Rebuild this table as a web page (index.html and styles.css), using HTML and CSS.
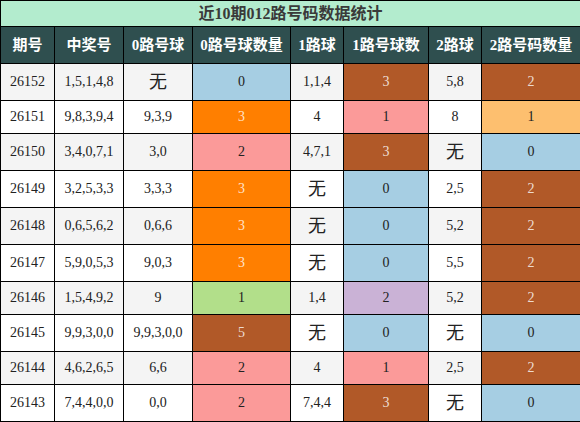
FILE: index.html
```html
<!DOCTYPE html>
<html lang="zh">
<head>
    <meta charset="UTF-8">
    <title>近10期012路号码数据统计</title>
    <link rel="stylesheet" href="styles.css">
</head>
<body>
    <table class="stats">
        <colgroup>
            <col style="width: 54px">
            <col style="width: 69px">
            <col style="width: 69px">
            <col style="width: 98px">
            <col style="width: 53px">
            <col style="width: 85px">
            <col style="width: 53px">
            <col style="width: 99px">
        </colgroup>
        <thead>
            <tr><th class="title" colspan="8">近10期012路号码数据统计</th></tr>
            <tr class="head">
                <th>期号</th>
                <th>中奖号</th>
                <th>0路号球</th>
                <th>0路号球数量</th>
                <th>1路球</th>
                <th>1路号球数</th>
                <th>2路球</th>
                <th>2路号码数量</th>
            </tr>
        </thead>
        <tbody>
            <tr class="tall">
                <td>26152</td><td>1,5,1,4,8</td><td><span class="none">无</span></td><td class="c0">0</td>
                <td>1,1,4</td><td class="c3">3</td><td>5,8</td><td class="c3">2</td>
            </tr>
            <tr>
                <td>26151</td><td>9,8,3,9,4</td><td>9,3,9</td><td class="c-or">3</td>
                <td>4</td><td class="c-pink">1</td><td>8</td><td class="c-lor">1</td>
            </tr>
            <tr class="tall">
                <td>26150</td><td>3,4,0,7,1</td><td>3,0</td><td class="c-pink">2</td>
                <td>4,7,1</td><td class="c3">3</td><td><span class="none">无</span></td><td class="c0">0</td>
            </tr>
            <tr class="tall">
                <td>26149</td><td>3,2,5,3,3</td><td>3,3,3</td><td class="c-or">3</td>
                <td><span class="none">无</span></td><td class="c0">0</td><td>2,5</td><td class="c3">2</td>
            </tr>
            <tr class="tall">
                <td>26148</td><td>0,6,5,6,2</td><td>0,6,6</td><td class="c-or">3</td>
                <td><span class="none">无</span></td><td class="c0">0</td><td>5,2</td><td class="c3">2</td>
            </tr>
            <tr class="tall">
                <td>26147</td><td>5,9,0,5,3</td><td>9,0,3</td><td class="c-or">3</td>
                <td><span class="none">无</span></td><td class="c0">0</td><td>5,5</td><td class="c3">2</td>
            </tr>
            <tr>
                <td>26146</td><td>1,5,4,9,2</td><td>9</td><td class="c-green">1</td>
                <td>1,4</td><td class="c-purple">2</td><td>5,2</td><td class="c3">2</td>
            </tr>
            <tr class="tall">
                <td>26145</td><td>9,9,3,0,0</td><td>9,9,3,0,0</td><td class="c3">5</td>
                <td><span class="none">无</span></td><td class="c0">0</td><td><span class="none">无</span></td><td class="c0">0</td>
            </tr>
            <tr>
                <td>26144</td><td>4,6,2,6,5</td><td>6,6</td><td class="c-pink">2</td>
                <td>4</td><td class="c-pink">1</td><td>2,5</td><td class="c3">2</td>
            </tr>
            <tr class="tall">
                <td>26143</td><td>7,4,4,0,0</td><td>0,0</td><td class="c-pink">2</td>
                <td>7,4,4</td><td class="c3">3</td><td><span class="none">无</span></td><td class="c0">0</td>
            </tr>
        </tbody>
    </table>
</body>
</html>
```

FILE: styles.css
```css
body {
    margin: 0;
    background: #ffffff;
    font-family: "Liberation Serif", "Noto Sans CJK SC", serif;
}

.stats {
    width: 580px;
    border-collapse: collapse;
    table-layout: fixed;
    border: 1px solid #000;
}

.stats th,
.stats td {
    border: 1px solid #000;
    text-align: center;
    padding: 0;
}

.title {
    background: #b3ecce;
    color: #3a3a3a;
    font-size: 16px;
    font-weight: bold;
    height: 25px;
    line-height: 25px;
}

.head th {
    background: #2f4f4f;
    color: #ffffff;
    font-size: 15px;
    font-weight: bold;
    height: 36px;
    line-height: 20px;
}

.stats td {
    color: #222;
    font-size: 14px;
    line-height: 16px;
    height: 32px;
}

.stats tbody tr.tall td {
    height: 36px;
}

.stats tbody tr:nth-child(odd) {
    background: #f4f4f4;
}

.stats tbody tr:nth-child(even) {
    background: #ffffff;
}

.none {
    font-family: "Noto Sans CJK SC", sans-serif;
    font-size: 18px;
    line-height: 16px;
}

/* 颜色块 */
.c0 { background: #a6cee3; }
.c-or { background: #ff7f00; }
.c3 { background: #b15928; }
.c-pink { background: #fb9a99; }
.c-lor { background: #fdbf6f; }
.c-green { background: #b2df8a; }
.c-purple { background: #cab2d6; }

.stats td.c-or,
.stats td.c3 {
    color: rgba(255, 255, 255, 0.8);
}
```
